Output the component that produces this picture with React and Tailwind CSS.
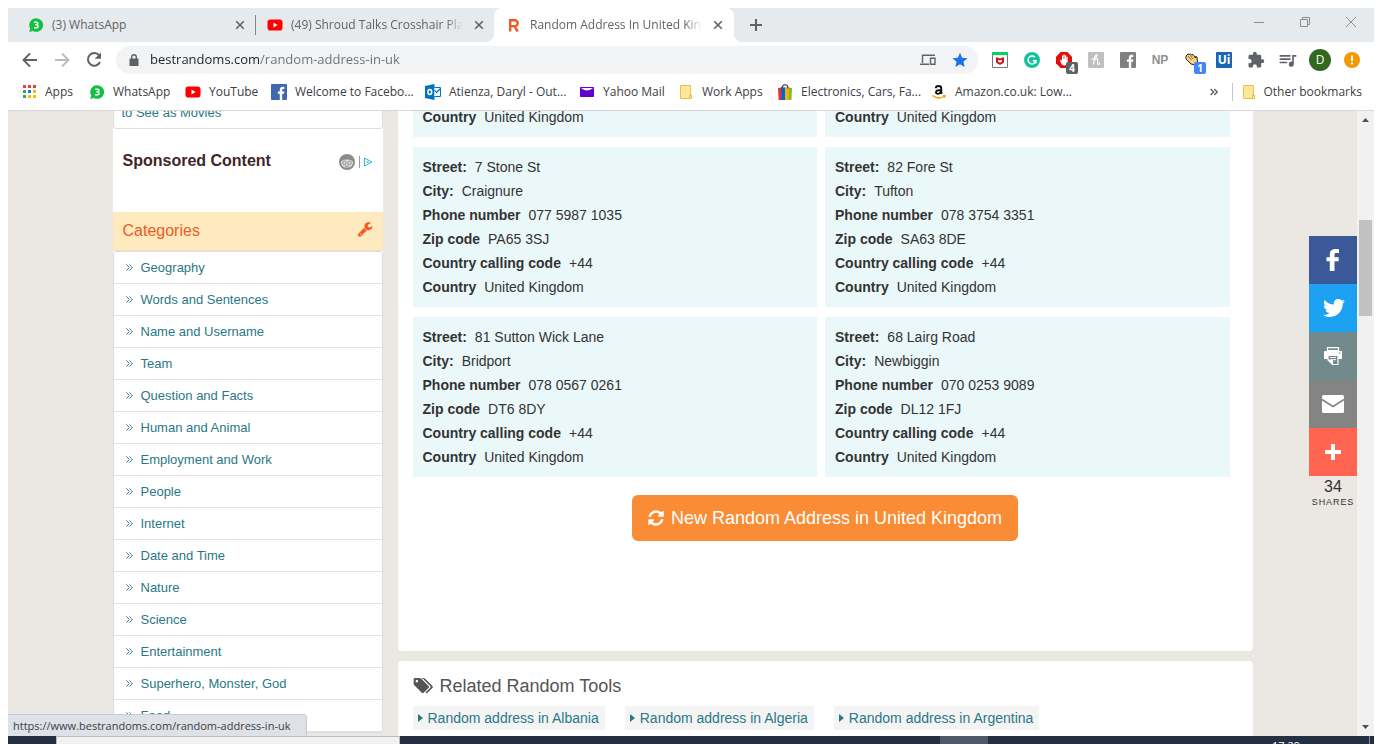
import React from "react";
import { FaTwitter } from "react-icons/fa";

const ext = "flex h-8 w-8 shrink-0 items-center justify-center";

function WhatsAppIcon() {
  return (
    <svg className="h-4 w-4" viewBox="0 0 16 16" aria-hidden="true">
      <path d="M8.2 1.2a6.8 6.8 0 1 1-3.3 12.7L1.2 15l1-3.6A6.8 6.8 0 0 1 8.2 1.2z" fill="#12c144" />
      <path d="M6.1 5.3h2.6q1.2 0 1.2 1.1T8.4 7.9q1.7.1 1.7 1.5 0 1.3-1.5 1.3H6M7.2 7.9h1.5" fill="none" stroke="#fff" strokeWidth="1.4" />
    </svg>
  );
}

function YouTubeIcon() {
  return (
    <svg className="h-4 w-4 shrink-0" viewBox="0 0 16 16" aria-hidden="true">
      <rect x="0.5" y="2.5" width="15" height="11" rx="2.8" fill="#f00" />
      <path d="M6.5 5.6v4.8L10.6 8z" fill="#fff" />
    </svg>
  );
}

function AppsIcon() {
  const colors = ["#ea4335", "#ea4335", "#ea4335", "#34a853", "#1a73e8", "#fbbc04", "#34a853", "#fbbc04", "#fbbc04"];
  return (
    <svg className="h-4 w-4" viewBox="0 0 16 16" aria-hidden="true">
      {colors.map((c, i) => (
        <rect key={i} x={2 + (i % 3) * 5} y={1 + Math.floor(i / 3) * 5} width="3" height="3" fill={c} />
      ))}
    </svg>
  );
}

function FacebookSquare({ tone }) {
  return (
    <svg className="h-4 w-4" viewBox="0 0 16 16" aria-hidden="true">
      <rect width="16" height="16" rx="1" fill={tone} />
      <path d="M8.8 16V9.8H6.9V7.4h1.9V5.9c0-2 1.1-3.1 3-3.1.8 0 1.5.1 1.5.1v2.2h-1.1c-.8 0-1 .5-1 1.1v1.2h2.2l-.4 2.4h-1.8V16z" fill="#fff" />
    </svg>
  );
}

function OutlookIcon() {
  return (
    <svg className="h-4 w-4" viewBox="0 0 16 16" aria-hidden="true">
      <path d="M0 2l9.5-2v16L0 14z" fill="#0072c6" />
      <path d="M9.5 3.5h6v9h-6" fill="#fff" stroke="#0072c6" />
      <path d="M9.5 6l2 2.5 4-4" fill="none" stroke="#0072c6" strokeWidth="1.2" />
      <ellipse cx="4.8" cy="8" rx="1.9" ry="2.5" fill="none" stroke="#fff" strokeWidth="1.5" />
    </svg>
  );
}

function YahooIcon() {
  return (
    <svg className="h-4 w-4" viewBox="0 0 16 16" aria-hidden="true">
      <rect x="1" y="3" width="14" height="10" rx="0.8" fill="#6001d2" />
      <path d="M2 4h12Q8 9 2 4z" fill="#fff" />
    </svg>
  );
}

function FolderIcon() {
  return (
    <svg className="h-4 w-4" viewBox="0 0 16 16" aria-hidden="true">
      <path d="M2.5 1.5h10v9.5h1v3.5h-11z" fill="#ffe79a" stroke="#e8c34c" />
      <path d="M11.5 14.5v-3h1.5" fill="none" stroke="#e8c34c" />
    </svg>
  );
}

function BagIcon() {
  return (
    <svg className="h-4 w-4" viewBox="0 0 16 16" aria-hidden="true">
      <path d="M1 4l4-.6V16H1.6z" fill="#e53238" />
      <path d="M4.400 3.300h4V16h-4z" fill="#0064d2" />
      <path d="M8.400 3.300h3.600V16H8.400z" fill="#f5af02" />
      <path d="M12 3.400l3 .6-.6 12H12z" fill="#86b817" />
      <path d="M5 4.500c0-5 6-5 6 0" fill="none" stroke="#333" strokeWidth="1.200" />
    </svg>
  );
}

function AmazonIcon() {
  return (
    <svg className="h-4 w-4" viewBox="0 0 16 16" aria-hidden="true">
      <path d="M4.800 4.200C4.800 2.600 6 2 7.600 2 9.400 2 10.300 2.800 10.300 4.500V8.800L11 9.800M10 6C7 6 5 6.400 5 8.300 5 10.600 9 10.300 10 7.500" fill="none" stroke="#111" strokeWidth="1.900" />
      <path d="M1.500 11.500q6 4.500 12 .8M11.800 11.600h2.200l-.6 2.200" fill="none" stroke="#f90" strokeWidth="1.300" />
    </svg>
  );
}

const bookmarks = [
  { label: "Apps", icon: <AppsIcon />, w: "w-[68px]" },
  { label: "WhatsApp", icon: <WhatsAppIcon />, w: "w-[96px]" },
  { label: "YouTube", icon: <YouTubeIcon />, w: "w-[86px]" },
  { label: "Welcome to Facebo...", icon: <FacebookSquare tone="#4267b2" />, w: "w-[154px]" },
  { label: "Atienza, Daryl - Out...", icon: <OutlookIcon />, w: "w-[154px]" },
  { label: "Yahoo Mail", icon: <YahooIcon />, w: "w-[99px]" },
  { label: "Work Apps", icon: <FolderIcon />, w: "w-[99px]" },
  { label: "Electronics, Cars, Fa...", icon: <BagIcon />, w: "w-[154px]" },
  { label: "Amazon.co.uk: Low...", icon: <AmazonIcon />, w: "w-[154px]" },
];

function CloseButton({ label }) {
  return (
    <button aria-label={label} className="flex h-4 w-4 shrink-0 items-center justify-center">
      <svg className="h-4 w-4" viewBox="0 0 16 16" fill="none" stroke="#5f6368" strokeWidth="1.600">
        <path d="M4.200 4.200l7.600 7.600M11.800 4.200l-7.600 7.600" />
      </svg>
    </button>
  );
}

function TabStrip() {
  const title = "min-w-0 flex-1 overflow-hidden whitespace-nowrap [mask-image:linear-gradient(to_right,black_90%,transparent)]";
  return (
    <header className="flex h-[34px] shrink-0 bg-[#e6eaed] text-[12px] text-[#5f6368]">
      <div className="flex w-[247px] items-center gap-2 pl-5 pr-[7px]">
        <WhatsAppIcon />
        <span className="min-w-0 flex-1 whitespace-nowrap">(3) WhatsApp</span>
        <CloseButton label="Close WhatsApp tab" />
      </div>
      <div className="flex w-[239px] items-center gap-2 pr-[7px]">
        <span className="mr-[3px] h-5 w-px shrink-0 bg-[#80868b]" />
        <YouTubeIcon />
        <span className={title}>(49) Shroud Talks Crosshair Placement</span>
        <CloseButton label="Close YouTube tab" />
      </div>
      <div className="relative flex w-[240px] items-center gap-2 rounded-t-lg bg-white pl-3 pr-2">
        <svg className="absolute -left-2 bottom-0 h-2 w-2" viewBox="0 0 8 8"><path d="M8 0v8H0a8 8 0 0 0 8-8z" fill="#fff" /></svg>
        <svg className="absolute -right-2 bottom-0 h-2 w-2" viewBox="0 0 8 8"><path d="M0 0v8h8a8 8 0 0 1-8-8z" fill="#fff" /></svg>
        <svg className="h-4 w-4 shrink-0" viewBox="0 0 16 16" fill="none" stroke="#f05a22" strokeWidth="2.400">
          <path d="M4.200 14.500V3.200h4.600a2.900 2.900 0 0 1 0 5.900H4.200M8.400 9.100l3.400 5.400" />
        </svg>
        <span className={title}>Random Address In United Kingdom</span>
        <CloseButton label="Close Random Address tab" />
      </div>
      <button aria-label="New tab" className="ml-3 flex w-5 items-center justify-center">
        <svg className="h-4 w-4" viewBox="0 0 16 16" stroke="#5f6368" strokeWidth="2"><path d="M8 2v12M2 8h12" /></svg>
      </button>
      <div className="ml-auto flex h-7 items-center">
        <button aria-label="Minimize" className="flex h-7 w-[46px] items-center justify-center">
          <svg className="h-3 w-3" viewBox="0 0 12 12" fill="none" stroke="#8b8f93"><path d="M1 6.500h10" /></svg>
        </button>
        <button aria-label="Restore" className="flex h-7 w-[46px] items-center justify-center">
          <svg className="h-3 w-3" viewBox="0 0 12 12" fill="none" stroke="#8b8f93"><path d="M1.500 3.500h7v7h-7zM3.500 3.500v-2h7v7h-2" /></svg>
        </button>
        <button aria-label="Close window" className="flex h-7 w-[46px] items-center justify-center">
          <svg className="h-3 w-3" viewBox="0 0 12 12" fill="none" stroke="#8b8f93"><path d="M1 1l10 10M11 1L1 11" /></svg>
        </button>
      </div>
    </header>
  );
}

function Extensions() {
  return (
    <div className="ml-[6px] flex">
      <button aria-label="McAfee" className={ext}>
        <svg className="h-4 w-4" viewBox="0 0 16 16"><path d="M.5.500h15v15H.500z" fill="#fff" stroke="#777" /><path d="M0 0h16v3H0z" fill="#01d167" /><path d="M4 5l4 1.500L12 5v5.500L8 13l-4-2.500z" fill="#c01818" /><path d="M6 7.800l2 .8 2-.8v1.700l-2 1.200-2-1.200z" fill="#fff" /></svg>
      </button>
      <button aria-label="Grammarly" className={ext}>
        <svg className="h-4 w-4" viewBox="0 0 16 16"><circle cx="8" cy="8" r="8" fill="#15c39a" /><path d="M11 5.200A4 4 0 1 0 12 8.700H8.800M11.900 8.500v3" fill="none" stroke="#fff" strokeWidth="1.400" /></svg>
      </button>
      <button aria-label="Ad blocker, 4 blocked" className={`${ext} relative`}>
        <svg className="h-4 w-4" viewBox="0 0 16 16"><path d="M4.700 0h6.600L16 4.700v6.600L11.300 16H4.700L0 11.300V4.700z" fill="#e40d0d" /><path d="M4 8l1-.5 1 1.500V3.500h1.200V7h.3V2.500h1.200V7H9V3.200h1.200V7.300h.3V4.700h1.200V10q-.5 3.500-3.500 3.500T4 8z" fill="#fff" /></svg>
        <span className="absolute left-[18px] top-[18px] flex h-3 w-3 items-center justify-center rounded-[2px] bg-[#5f6060] text-[10px] font-bold text-white">4</span>
      </button>
      <button aria-label="Honey" className={ext}>
        <svg className="h-4 w-4" viewBox="0 0 16 16"><rect width="16" height="16" rx="1" fill="#c0c0c0" /><path d="M3.500 7.500l3-1.500M8.500 2.500C6.500 3 6.500 6 5.500 12.500M6 9c2-3 4-3 3.800-.5-.2 2-.8 4 .7 4L12 11M8.500 2.500c1.500.5-.5 3-2 4" fill="none" stroke="#fff" strokeWidth="1.200" /></svg>
      </button>
      <button aria-label="Facebook extension" className={ext}><FacebookSquare tone="#808080" /></button>
      <button className={`${ext} font-['Liberation_Sans_Narrow','Liberation_Sans',sans-serif] text-[12px] font-bold text-[#909090]`}>NP</button>
      <button aria-label="Wave, 1 notification" className={`${ext} relative`}>
        <svg className="h-4 w-4" viewBox="0 0 16 16"><path d="M2 4l2-2 1 .5L6.500 2l1 1L9 2.500 11.500 6V4.500l1.500.5.500 5L11 13 7 12 2 7z" fill="#ffd27a" stroke="#222" strokeWidth="1" /><path d="M4 4l3.500 4M6.500 3.500L9 7" stroke="#222" strokeWidth="0.600" /></svg>
        <span className="absolute left-[18px] top-[18px] flex h-3 w-3 items-center justify-center rounded-[2px] bg-[#4285f4] text-[10px] font-bold text-white">1</span>
      </button>
      <button className={ext}><span className="flex h-4 w-4 items-center justify-center rounded-[1px] bg-[#1a66b3] text-[12px] font-bold leading-4 text-white">Ui</span></button>
      <button aria-label="Extensions" className={ext}>
        <svg className="h-[18px] w-[18px]" viewBox="0 0 24 24" fill="#5f6368"><path d="M20.500 11H19V7c0-1.100-.9-2-2-2h-4V3.500a2.500 2.500 0 0 0-5 0V5H4c-1.100 0-2 .9-2 2v3.800h1.500a2.700 2.700 0 0 1 0 5.400H2V20c0 1.100.9 2 2 2h3.800v-1.500a2.700 2.700 0 0 1 5.400 0V22H17c1.100 0 2-.9 2-2v-4h1.500a2.500 2.500 0 0 0 0-5z" /></svg>
      </button>
      <button aria-label="Media controls" className={ext}>
        <svg className="h-5 w-5" viewBox="0 0 24 24" fill="#5f6368"><path d="M2 6h13v2H2zm0 4h13v2H2zm0 4h9v2H2zm15-8h5v2h-3v9a3 3 0 1 1-2-2.800z" /></svg>
      </button>
      <button aria-label="Profile D" className={ext}><span className="flex h-[22px] w-[22px] items-center justify-center rounded-full bg-[#33691e] text-[12px] text-white">D</span></button>
      <button aria-label="Update available" className={ext}>
        <svg className="h-4 w-4" viewBox="0 0 16 16"><circle cx="8" cy="8" r="8" fill="#f29900" /><path d="M7 3.500h2V9H7zM7 10.500h2v2H7z" fill="#fff" /></svg>
      </button>
    </div>
  );
}

function Toolbar() {
  return (
    <div className="flex h-9 shrink-0 items-center bg-white px-[6px]">
      <button aria-label="Back" className={ext}>
        <svg className="h-[18px] w-[18px]" viewBox="0 0 18 18" fill="none" stroke="#5f6368" strokeWidth="1.900"><path d="M16 9H3M9 2.500L2.500 9 9 15.500" /></svg>
      </button>
      <button aria-label="Forward" className={ext}>
        <svg className="h-[18px] w-[18px]" viewBox="0 0 18 18" fill="none" stroke="#babcbe" strokeWidth="1.900"><path d="M2 9h13M9 2.500L15.500 9 9 15.500" /></svg>
      </button>
      <button aria-label="Reload" className={ext}>
        <svg className="h-[18px] w-[18px]" viewBox="0 0 18 18"><path d="M14.200 4.500A6.300 6.300 0 1 0 15 11" fill="none" stroke="#5f6368" strokeWidth="2" /><path d="M16 1.500v6.300H9.700z" fill="#5f6368" /></svg>
      </button>
      <div className="ml-[6px] flex h-7 min-w-0 flex-1 items-center rounded-full bg-[#f1f3f4] pl-3 pr-[10px]">
        <svg className="mr-[10px] h-3 w-3 shrink-0" viewBox="0 0 12 12"><path d="M1.500 4.500h9V12h-9z" fill="#5f6368" /><path d="M3.700 5V3a2.300 2.300 0 0 1 4.600 0v2" fill="none" stroke="#5f6368" strokeWidth="1.400" /></svg>
        <input
          aria-label="Address"
          defaultValue="bestrandoms.com/random-address-in-uk"
          className="min-w-0 flex-1 bg-[linear-gradient(to_right,#202124_110px,#6b6f74_110px)] bg-clip-text text-[13px] text-transparent outline-none"
        />
        <button aria-label="Send to your devices" className={`${ext} mr-2`}>
          <svg className="h-4 w-4" viewBox="0 0 16 16" fill="none" stroke="#5f6368" strokeWidth="1.400"><path d="M15 3.200H2.500V11M0 12.200h9M10.500 6.200h4.500v6h-4.500z" /></svg>
        </button>
        <button aria-label="Bookmark this page" className="flex h-4 w-4 items-center justify-center">
          <svg className="h-4 w-4 shrink-0" viewBox="0 0 16 16"><path d="M8 .8l2.100 5 5.400.5-4.100 3.500 1.300 5.300L8 12.300l-4.700 2.800 1.300-5.300L.5 6.300l5.400-.5z" fill="#1a73e8" /></svg>
        </button>
      </div>
      <Extensions />
    </div>
  );
}

function Bookmarks() {
  return (
    <nav className="flex h-[33px] shrink-0 items-center border-b border-[#d6d8da] bg-white pb-1 pl-[13px] pr-3 text-[12px] text-[#3c4043]">
      {bookmarks.map((b) => (
        <a key={b.label} href="#" className={`flex shrink-0 items-center gap-2 whitespace-nowrap ${b.w}`}>
          <span className="shrink-0">{b.icon}</span>
          {b.label}
        </a>
      ))}
      <button aria-label="More bookmarks" className="ml-auto mr-[10px] flex h-4 w-4 items-center justify-center">
        <svg className="h-2 w-2" viewBox="0 0 8 8" fill="none" stroke="#5f6368" strokeWidth="1.500"><path d="M.6 1l3 3-3 3M4.300 1l3 3-3 3" /></svg>
      </button>
      <a href="#" className="flex items-center gap-[6px] whitespace-nowrap border-l border-[#c4c7ca] pl-2">
        <FolderIcon />
        Other bookmarks
      </a>
    </nav>
  );
}

const categories = [
  "Geography", "Words and Sentences", "Name and Username", "Team", "Question and Facts", "Human and Animal",
  "Employment and Work", "People", "Internet", "Date and Time", "Nature", "Science", "Entertainment",
  "Superhero, Monster, God", "Food",
];

function Sidebar() {
  return (
    <aside className="w-[270px] shrink-0 self-start bg-white">
      <a href="#" className="block rounded-b border border-t-0 border-[#ddd] pb-[5px] pl-2 text-[13px] leading-5 text-[#2a7886]">to See as Movies</a>
      <div className="flex h-[83px] items-start justify-between px-[10px] pt-5">
        <h3 className="text-[16px] font-bold leading-6 text-[#412528]">Sponsored Content</h3>
        <div className="flex h-[26px] items-center gap-[3px]">
          <svg className="h-4 w-4" viewBox="0 0 16 16"><circle cx="8" cy="8" r="8" fill="#8c8c8c" /><path d="M2 8Q3 5.500 8 5.500T14 8q0 5.500-6 5.500T2 8z" fill="#fff" opacity=".75" /><circle cx="5.500" cy="8.800" r="1.800" fill="#ddd" stroke="#8c8c8c" /><circle cx="10.500" cy="8.800" r="1.800" fill="#ddd" stroke="#8c8c8c" /><path d="M6 11.800q2 1 4 0" stroke="#8c8c8c" fill="none" /></svg>
          <span className="ml-px h-3 w-px bg-[#999]" />
          <svg className="h-[10px] w-[10px]" viewBox="0 0 10 10" fill="none" stroke="#3db0c5"><path d="M1.500 1v8l7.500-4z" /><path d="M4 4v2l2-1z" strokeWidth="0.600" /></svg>
        </div>
      </div>
      <div className="flex h-[39px] items-center justify-between border-b border-[#eedfc0] bg-[#ffeabf] px-[10px] text-[#f15a24]">
        <h3 className="text-[16px]">Categories</h3>
        <svg className="mb-1 h-4 w-4" viewBox="0 0 1792 1792" fill="#f15a24"><path d="M448 1472q0-26-19-45t-45-19-45 19-19 45 19 45 45 19 45-19 19-45zm644-420l-682 682q-37 37-90 37-52 0-91-37l-106-108q-38-36-38-90 0-53 38-91l681-681q39 98 114.500 173.500t173.500 114.500zm634-435q0 39-23 106-47 134-164.500 217.500t-258.500 83.500q-185 0-316.500-131.500t-131.500-316.500 131.500-316.500 316.500-131.500q58 0 121.500 16.500t107.500 46.500q16 11 16 28t-16 28l-293 169v224l193 107q5-3 79-48.500t135.500-81 70.500-35.500q15 0 23.500 10t8.500 25z" /></svg>
      </div>
      <ul className="rounded-t border border-[#ddd]">
        {categories.map((c) => (
          <li key={c} className="h-8 border-b border-[#e2e2e2]">
            <a href="#" className="flex h-[31px] items-center gap-2 pl-3 text-[13px] text-[#2a7886]">
              <svg className="h-[7px] w-[7px]" viewBox="0 0 7 7" fill="none" stroke="#3d7c88"><path d="M.4.4l3 3.100-3 3.100M3.400.4l3 3.100-3 3.100" /></svg>
              {c}
            </a>
          </li>
        ))}
      </ul>
    </aside>
  );
}

const addresses = [
  { street: "7 Stone St", city: "Craignure", phone: "077 5987 1035", zip: "PA65 3SJ" },
  { street: "82 Fore St", city: "Tufton", phone: "078 3754 3351", zip: "SA63 8DE" },
  { street: "81 Sutton Wick Lane", city: "Bridport", phone: "078 0567 0261", zip: "DT6 8DY" },
  { street: "68 Lairg Road", city: "Newbiggin", phone: "070 0253 9089", zip: "DL12 1FJ" },
];

function Row({ name, value }) {
  return (
    <p className="flex gap-2">
      <b>{name}</b>
      <span>{value}</span>
    </p>
  );
}

const card = "mr-2 bg-[#ebf8fa] pl-[10px] pb-2";

function Main() {
  return (
    <main className="flex min-w-0 flex-1 flex-col gap-[10px]">
      <section className="h-[548px] shrink-0 rounded-b bg-white px-[15px] pt-[2px]">
        <div className="grid grid-cols-2 gap-y-[10px] text-[14px] leading-6 text-[#333]">
          <div className={card}><Row name="Country" value="United Kingdom" /></div>
          <div className={card}><Row name="Country" value="United Kingdom" /></div>
          {addresses.map((a) => (
            <div key={a.street} className={`${card} pt-2`}>
              <Row name="Street:" value={a.street} />
              <Row name="City:" value={a.city} />
              <Row name="Phone number" value={a.phone} />
              <Row name="Zip code" value={a.zip} />
              <Row name="Country calling code" value="+44" />
              <Row name="Country" value="United Kingdom" />
            </div>
          ))}
        </div>
        <div className="flex justify-center pt-[18px]">
          <button className="flex h-[46px] items-center gap-[7px] rounded-md bg-[#fa8c35] px-4 text-[18px] text-white">
            <svg className="h-4 w-4" viewBox="100 100 1592 1592" fill="#fff"><path d="M1639 1056q0 5-1 7-64 268-268 434.500t-478 166.500q-146 0-282.500-55t-243.500-157l-129 129q-19 19-45 19t-45-19-19-45v-448q0-26 19-45t45-19h448q26 0 45 19t19 45-19 45l-137 137q71 66 161 102t187 36q134 0 250-65t186-179q11-17 53-117 8-23 30-23h192q13 0 22.500 9.500t9.500 22.500zm25-800v448q0 26-19 45t-45 19h-448q-26 0-45-19t-19-45 19-45l138-138q-148-137-349-137-134 0-250 65t-186 179q-11 17-53 117-8 23-30 23h-199q-13 0-22.500-9.500t-9.500-22.500v-7q65-268 270-434.500t480-166.500q146 0 284 55.500t245 156.500l130-129q19-19 45-19t45 19 19 45z" /></svg>
            New Random Address in United Kingdom
          </button>
        </div>
      </section>
      <section className="shrink-0 rounded bg-white px-[15px] pb-10 pt-[14px]">
        <h2 className="flex items-center gap-[7px] text-[18px] leading-[22px] text-[#555]">
          <svg className="h-[18px] w-5" viewBox="64 64 1984 1728" fill="#555"><path d="M576 448q0-53-37.500-90.500t-90.500-37.500-90.500 37.500-37.500 90.500 37.500 90.500 90.500 37.500 90.500-37.500 37.500-90.500zm1067 576q0 53-37 90l-491 492q-39 37-91 37-53 0-90-37l-715-716q-38-37-64.500-101t-26.500-117v-416q0-52 38-90t90-38h416q53 0 117 26.500t102 64.500l715 714q37 39 37 91zm384 0q0 53-37 90l-491 492q-39 37-91 37-36 0-59-14t-53-45l470-470q37-37 37-90 0-52-37-91l-715-714q-38-38-102-64.500t-117-26.500h224q53 0 117 26.500t102 64.500l715 714q37 39 37 91z" /></svg>
          Related Random Tools
        </h2>
        <div className="mt-[9px] flex gap-5">
          {["Albania", "Algeria", "Argentina"].map((n) => (
            <a key={n} href="#" className="flex h-6 items-center gap-[5px] bg-[#f4f4f4] pl-[5px] pr-[6px] text-[14px] text-[#2a7886]">
              <svg className="h-2 w-[5px]" viewBox="0 0 5 8"><path d="M0 0l5 4-5 4z" fill="#2a7886" /></svg>
              Random address in {n}
            </a>
          ))}
        </div>
      </section>
    </main>
  );
}

function ShareBar() {
  const cell = "flex h-12 w-12 items-center justify-center text-white";
  return (
    <div className="absolute right-0 top-[125px] w-12 text-center text-[#333]">
      <a href="#" aria-label="Facebook" className={`${cell} bg-[#3b5998]`}>
        <svg className="h-8 w-8" viewBox="0 0 32 32" fill="#fff"><path d="M22 5.200C21.500 5.100 19.800 5 18.400 5c-3.900 0-5.600 2.300-5.600 5.300v2.900H9.500v4h3.300V27h4.700v-9.800h4.200v-4h-4.200v-2.500c0-1.400.8-1.800 1.900-1.800H22z" /></svg>
      </a>
      <a href="#" aria-label="Twitter" className={`${cell} bg-[#1da1f2] pl-[2px]`}><FaTwitter className="h-[22px] w-[22px]" /></a>
      <a href="#" aria-label="Print" className={`${cell} bg-[#738a8d]`}>
        <svg className="h-5 w-5" viewBox="0 0 20 20"><path d="M4.500 1.700h11v3h-11z" fill="none" stroke="#fff" strokeWidth="1.300" /><path d="M1.500 5h17l.5.500V13h-4V9H5v4H1V5.500z" fill="#fff" /><path d="M5 9.500h10v9H9.500L5 14z" fill="#738a8d" stroke="#fff" strokeWidth="1.200" /><path d="M7 11.500h6M8 13.700h5M5 14h4.500v4z" stroke="#fff" fill="#fff" /><circle cx="16.500" cy="7" r=".8" fill="#738a8d" /></svg>
      </a>
      <a href="#" aria-label="Email" className={`${cell} bg-[#848484]`}>
        <svg className="h-[18px] w-[22px]" viewBox="0 0 22 18"><rect width="22" height="18" rx="1.500" fill="#fff" /><path d="M0 4.500l11 7 11-7" fill="none" stroke="#848484" strokeWidth="1.500" /></svg>
      </a>
      <a href="#" aria-label="More sharing" className={`${cell} bg-[#ff6550]`}>
        <svg className="h-4 w-4" viewBox="0 0 16 16"><path d="M6 0h4v6h6v4h-6v6H6v-6H0V6h6z" fill="#fff" /></svg>
      </a>
      <p className="mt-px text-[16px] leading-5">34</p>
      <p className="text-[9px] leading-[10px] tracking-widest">SHARES</p>
    </div>
  );
}

function Scrollbar() {
  return (
    <div className="flex w-[17px] shrink-0 flex-col items-center bg-[#f1f1f1]">
      <svg className="mt-1 h-[10px] w-[7px]" viewBox="0 0 7 10"><path d="M0 7l3.500-4L7 7z" fill="#505050" /></svg>
      <div className="mt-[95px] h-24 w-[13px] bg-[#c1c1c1]" />
      <svg className="mb-1 mt-auto h-[10px] w-[7px]" viewBox="0 0 7 10"><path d="M0 3l3.500 4L7 3z" fill="#505050" /></svg>
    </div>
  );
}

export default function App() {
  return (
    <div className="flex h-screen flex-col overflow-hidden bg-white px-2 pt-2 font-['Open_Sans','Noto_Sans',sans-serif]">
      <TabStrip />
      <Toolbar />
      <Bookmarks />
      <div className="relative flex min-h-0 flex-1 font-['Liberation_Sans',Arial,sans-serif]">
        <div className="relative min-w-0 flex-1 overflow-hidden bg-[#ebe7e2]">
          <div className="mx-auto -mt-2 flex max-w-[1140px] gap-[15px]">
            <Sidebar />
            <Main />
          </div>
          <ShareBar />
        </div>
        <Scrollbar />
        <div className="absolute bottom-0 left-0 h-[22px] w-[299px] overflow-hidden rounded-tr border-r border-t border-[#c9ccd1] bg-[#dee1e6] px-[5px] font-['Open_Sans','Noto_Sans',sans-serif] text-[11px] leading-[22px] text-[#3c4043]">
          https://www.bestrandoms.com/random-address-in-uk
        </div>
      </div>
      <footer className="flex h-2 shrink-0 overflow-hidden bg-[#243042]">
        <div className="ml-12 w-[344px] border border-b-0 border-[#bbb] bg-[#f2f2f2]" />
        <div className="ml-auto mr-[284px] w-12 bg-[#4f5a69]" />
        <time className="mr-[69px] mt-1 font-['Open_Sans',sans-serif] text-[11px] leading-3 text-white">17:29</time>
        <div className="mr-1 w-px bg-[#8a919c]" />
      </footer>
    </div>
  );
}
